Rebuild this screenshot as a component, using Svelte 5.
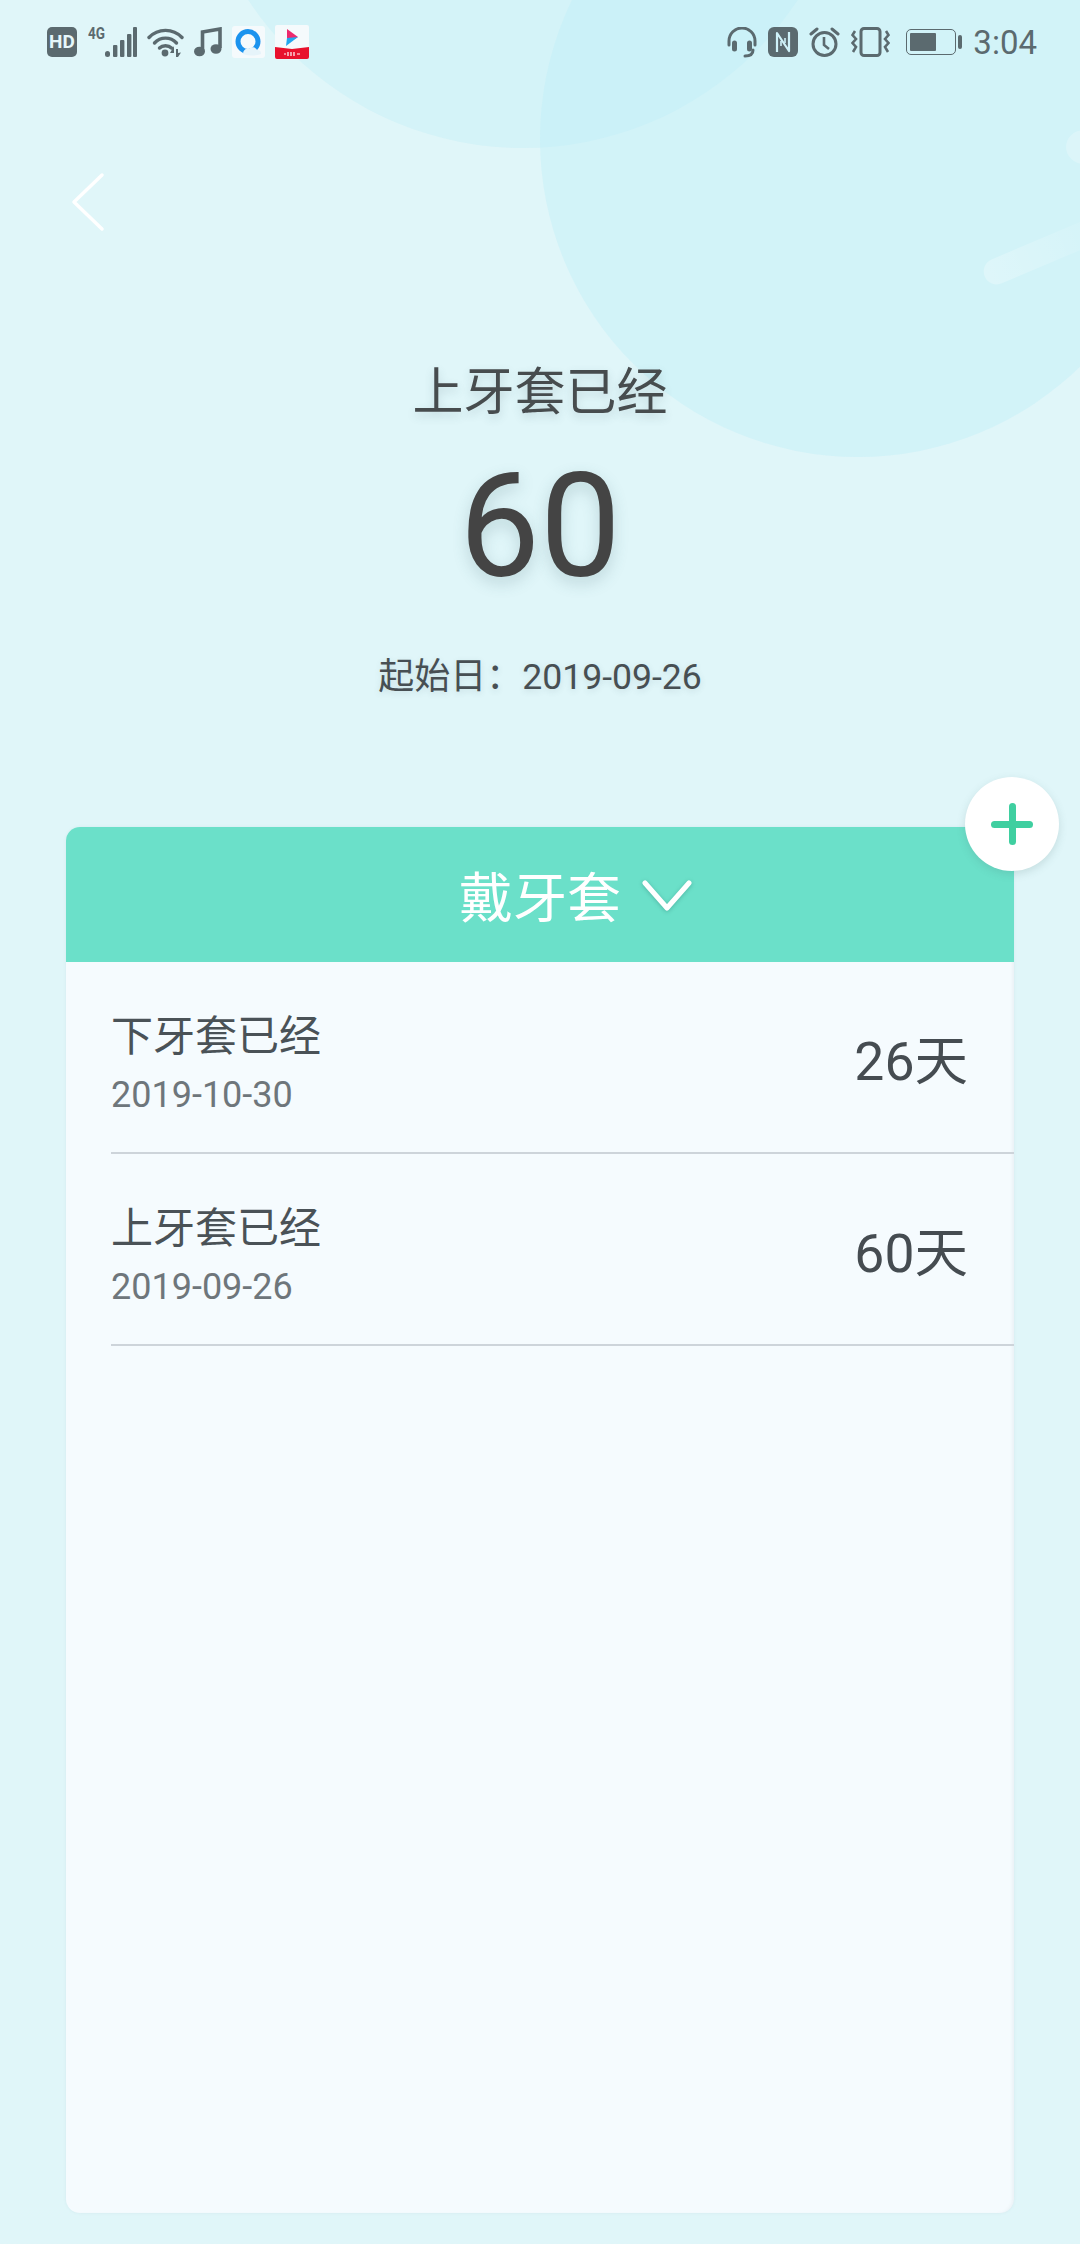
<script>
  const rows = [
    { title: '下牙套已经', date: '2019-10-30', days: 26 },
    { title: '上牙套已经', date: '2019-09-26', days: 60 },
  ];
</script>

<div class="page">
  <!-- background blobs -->
  <div class="blob blob-top"></div>
  <div class="blob blob-big"></div>
  <div class="dot"></div>
  <div class="streak"></div>

  <div class="status">
    <div class="status-left">
      <span class="hd">HD</span>
      <svg width="49" height="32" viewBox="0 0 49 32">
        <text class="net" x="0" y="13" textLength="17" lengthAdjust="spacingAndGlyphs">4G</text>
        <rect x="17" y="25" width="5" height="6" rx="2.5" />
        <rect x="25" y="19" width="4.4" height="12" rx="1" />
        <rect x="32" y="14" width="4.4" height="17" rx="1" />
        <rect x="39" y="8" width="4.4" height="23" rx="1" />
        <rect x="45" y="1" width="4" height="30" rx="1" />
      </svg>
      <svg width="37" height="32" viewBox="0 0 37 32">
        <g fill="none" stroke="#5b6a6f" stroke-width="3.4" stroke-linecap="round">
          <path d="M2 11.5C11 2 26 2 35 11.5" />
          <path d="M7.5 17C13.5 10.5 23.5 10.5 29.5 17" />
          <path d="M12.5 22C15.5 19 21.5 19 24.5 22" />
        </g>
        <circle cx="18" cy="27" r="3.4" fill="#5b6a6f" />
        <path d="M27 20l-4 7h4zM29 23h2v4l3-.5L31 31h-2z" fill="#5b6a6f" />
      </svg>
      <svg width="28" height="30" viewBox="0 0 28 30">
        <path d="M8.5 24V5L26 2v19" fill="none" stroke="#5b6a6f" stroke-width="3.6" />
        <ellipse cx="5.5" cy="24.5" rx="5.5" ry="4.8" fill="#5b6a6f" />
        <ellipse cx="22" cy="22" rx="5.5" ry="4.8" fill="#5b6a6f" />
      </svg>
      <svg class="app-one" width="33" height="32" viewBox="0 0 33 32">
        <rect width="33" height="32" rx="3" />
        <circle cx="16" cy="15.5" r="10" fill="none" stroke="#1b93ee" stroke-width="5" />
        <path d="M11 28c0-4 3-6 6-5 2-3 7-2 8 1 3 0 4 1 4 4-6 2-12 2-18 0z" fill="#e6f4fa" />
      </svg>
      <svg class="app-two" width="34" height="34" viewBox="0 0 34 34">
        <rect width="34" height="34" rx="2" />
        <path d="M0 22l17 2 17-2v10a2 2 0 0 1-2 2H2a2 2 0 0 1-2-2z" fill="#e8112d" />
        <path d="M12 4l11 8-7 4-4-3z" fill="#ec2a6e" />
        <path d="M23 12L11 21l1-8z" fill="#22a7ee" />
        <path d="M9 29h2M13 27v4M16 27v4M19 27v4M22 29h3" stroke="#fff" stroke-width="1.2" />
      </svg>
    </div>

    <div class="status-right">
      <svg width="30" height="31" viewBox="0 0 30 31" fill="none" stroke="#5b6a6f" stroke-width="3" stroke-linecap="round">
        <path d="M2 18V14a13 13 0 0 1 26 0v4" />
        <path d="M7.5 16v6M22.5 16v6" stroke-width="5" />
        <path d="M26 23c0 4-3 6-8 6" />
      </svg>
      <svg width="30" height="30" viewBox="0 0 30 30">
        <rect width="30" height="30" rx="6" fill="#5b6a6f" />
        <path d="M9 25V6l12 18V5" fill="none" stroke="#cff2f9" stroke-width="2.2" stroke-linejoin="round" />
        <path d="M13 19V14M17 16v-5" stroke="#cff2f9" stroke-width="1.6" />
      </svg>
      <svg width="31" height="31" viewBox="0 0 31 31" fill="none" stroke="#5b6a6f" stroke-width="3">
        <circle cx="15.5" cy="17" r="11.5" />
        <path d="M15 10v8l5 4" stroke-width="2.6" />
        <path d="M2 7l6-5M29 7l-6-5" stroke-linecap="round" />
      </svg>
      <svg width="39" height="30" viewBox="0 0 39 30" fill="none" stroke="#5b6a6f">
        <rect x="10" y="1.5" width="19" height="27" rx="3" stroke-width="3" />
        <path d="M4 4L1.5 8 5 12 1.5 16 5 20 2 25M35 4l2.5 4L34 12l3.500 4L34 20l3 5" stroke-width="2.6" />
      </svg>
      <div class="battery">
        <div class="battery-body"><div class="battery-fill"></div></div>
        <div class="battery-nub"></div>
      </div>
      <span class="clock">3:04</span>
    </div>
  </div>

  <div class="nav">
    <svg width="34" height="60" viewBox="0 0 34 60">
      <path d="M31 3L3 30l28 27" fill="none" stroke="#fff" stroke-width="3.5" stroke-linecap="round" stroke-linejoin="round" />
    </svg>
  </div>

  <div class="hero">
    <div class="hero-title">上牙套已经</div>
    <div class="hero-count">60</div>
    <div class="hero-start">起始日：<span class="hero-date">2019-09-26</span></div>
  </div>

  <div class="card">
    <button class="add" aria-label="添加">
      <span class="plus"></span>
    </button>
    <div class="card-head">
      <span>戴牙套</span>
      <svg width="52" height="34" viewBox="0 0 52 34">
        <path d="M4 5l22 25L48 5" fill="none" stroke="#fff" stroke-width="5" stroke-linecap="round" stroke-linejoin="round" />
      </svg>
    </div>
    {#each rows as row}
      <div class="row">
        <div class="row-text">
          <div class="row-title">{row.title}</div>
          <div class="row-date">{row.date}</div>
        </div>
        <div class="row-days">{row.days}天</div>
      </div>
    {/each}
  </div>
</div>

<style>
  :global(body) {
    margin: 0;
  }

  .page {
    position: relative;
    width: 1080px;
    height: 2244px;
    overflow: hidden;
    background: #e0f6f9;
    font-family: Roboto, "Noto Sans CJK SC", sans-serif;
    color: #444;
  }

  .blob {
    position: absolute;
    border-radius: 50%;
  }
  .blob-top {
    left: 194px;
    top: -510px;
    width: 658px;
    height: 658px;
    background: rgba(186, 236, 245, 0.32);
  }
  .blob-big {
    left: 540px;
    top: -179px;
    width: 636px;
    height: 636px;
    background: rgba(190, 238, 248, 0.42);
  }
  .dot {
    position: absolute;
    left: 1066px;
    top: 130px;
    width: 36px;
    height: 34px;
    border-radius: 50%;
    background: rgba(255, 255, 255, 0.22);
  }
  .streak {
    position: absolute;
    left: 980px;
    top: 240px;
    width: 120px;
    height: 26px;
    border-radius: 13px;
    transform: rotate(-23deg);
    background: linear-gradient(90deg, rgba(255, 255, 255, 0.28), rgba(255, 255, 255, 0.06));
  }

  .status {
    position: relative;
    height: 84px;
    padding: 0 43px 0 47px;
    display: flex;
    align-items: center;
    justify-content: space-between;
  }
  .status svg {
    display: block;
  }
  .status-left,
  .status-right {
    display: flex;
    align-items: center;
  }
  .status-left {
    gap: 10px;
  }
  .status-right {
    gap: 11px;
  }
  .hd {
    width: 30px;
    height: 30px;
    margin-right: 1px;
    border-radius: 5px;
    background: #5b6a6f;
    color: #e6f7fa;
    font-size: 19px;
    font-weight: 700;
    line-height: 30px;
    text-align: center;
  }
  .status-left rect {
    fill: #5b6a6f;
  }
  .status-left .app-one rect,
  .status-left .app-two rect {
    fill: #f5fafc;
  }
  .net {
    fill: #5b6a6f;
    font-size: 16px;
    font-weight: 700;
  }
  .battery {
    display: flex;
    align-items: center;
    gap: 2px;
    margin-left: 5px;
  }
  .battery-body {
    width: 50px;
    height: 26px;
    box-sizing: border-box;
    padding: 3px;
    border: 1.5px solid #5b6a6f;
    border-radius: 5px;
  }
  .battery-fill {
    width: 26px;
    height: 100%;
    background: #5b6a6f;
    border-radius: 1px;
  }
  .battery-nub {
    width: 4px;
    height: 14px;
    background: #5b6a6f;
    border-radius: 2px;
  }
  .clock {
    font-size: 33px;
    color: #5b6a6f;
    line-height: 1;
  }

  .nav {
    position: relative;
    height: 273px;
    padding: 88px 0 0 71px;
    box-sizing: border-box;
  }
  .nav svg {
    display: block;
  }

  .hero {
    position: relative;
    display: flex;
    flex-direction: column;
    align-items: center;
  }
  .hero-title {
    font-size: 51px;
    line-height: 72px;
    color: #474c4e;
    text-shadow: 0 4px 10px rgba(60, 90, 100, 0.2);
  }
  .hero-count {
    margin-top: 13px;
    font-size: 144px;
    line-height: 170px;
    color: #444;
    text-shadow: 0 6px 16px rgba(60, 100, 110, 0.22);
  }
  .hero-start {
    margin-top: 40px;
    font-size: 36px;
    line-height: 50px;
    color: #474f53;
    text-shadow: 0 2px 6px rgba(60, 90, 100, 0.15);
  }
  .hero-date {
    font-size: 35.6px;
  }

  .card {
    position: absolute;
    left: 66px;
    top: 827px;
    width: 948px;
    height: 1386px;
    background: #f5fbfe;
    border-radius: 14px;
    box-shadow: 0 0 3px rgba(120, 160, 170, 0.12), inset -3px 0 3px -1px rgba(100, 130, 140, 0.07);
  }
  .add {
    position: absolute;
    top: -50px;
    right: -45px;
    width: 94px;
    height: 94px;
    padding: 0;
    border: none;
    border-radius: 50%;
    background: #fff;
    box-shadow: 0 3px 8px rgba(70, 110, 110, 0.18);
    display: flex;
    align-items: center;
    justify-content: center;
  }
  .plus {
    position: relative;
    width: 42px;
    height: 42px;
  }
  .plus::before,
  .plus::after {
    content: "";
    position: absolute;
    background: #3fcfa0;
    border-radius: 4px;
  }
  .plus::before {
    left: 0;
    right: 0;
    top: 17.5px;
    height: 7px;
  }
  .plus::after {
    top: 0;
    bottom: 0;
    left: 17.5px;
    width: 7px;
  }
  .card-head {
    height: 135px;
    border-radius: 14px 14px 0 0;
    background: #6be0c9;
    color: #fff;
    font-size: 54px;
    display: flex;
    align-items: center;
    justify-content: center;
    gap: 20px;
  }
  .card-head svg {
    margin-right: -72px;
    filter: drop-shadow(0 1px 2px rgba(40, 120, 110, 0.4));
  }
  .row {
    margin-left: 45px;
    height: 190px;
    padding-right: 46px;
    border-bottom: 2px solid #cdd4da;
    display: flex;
    align-items: center;
    justify-content: space-between;
  }
  .row-text {
    padding-top: 13px;
  }
  .row-title {
    font-size: 42px;
    line-height: 60px;
    color: #4a5257;
  }
  .row-date {
    font-size: 36px;
    line-height: 50px;
    color: #6e767b;
    margin-top: 3px;
  }
  .row-days {
    font-size: 53.5px;
    color: #454c51;
    margin-bottom: 2px;
  }
</style>
